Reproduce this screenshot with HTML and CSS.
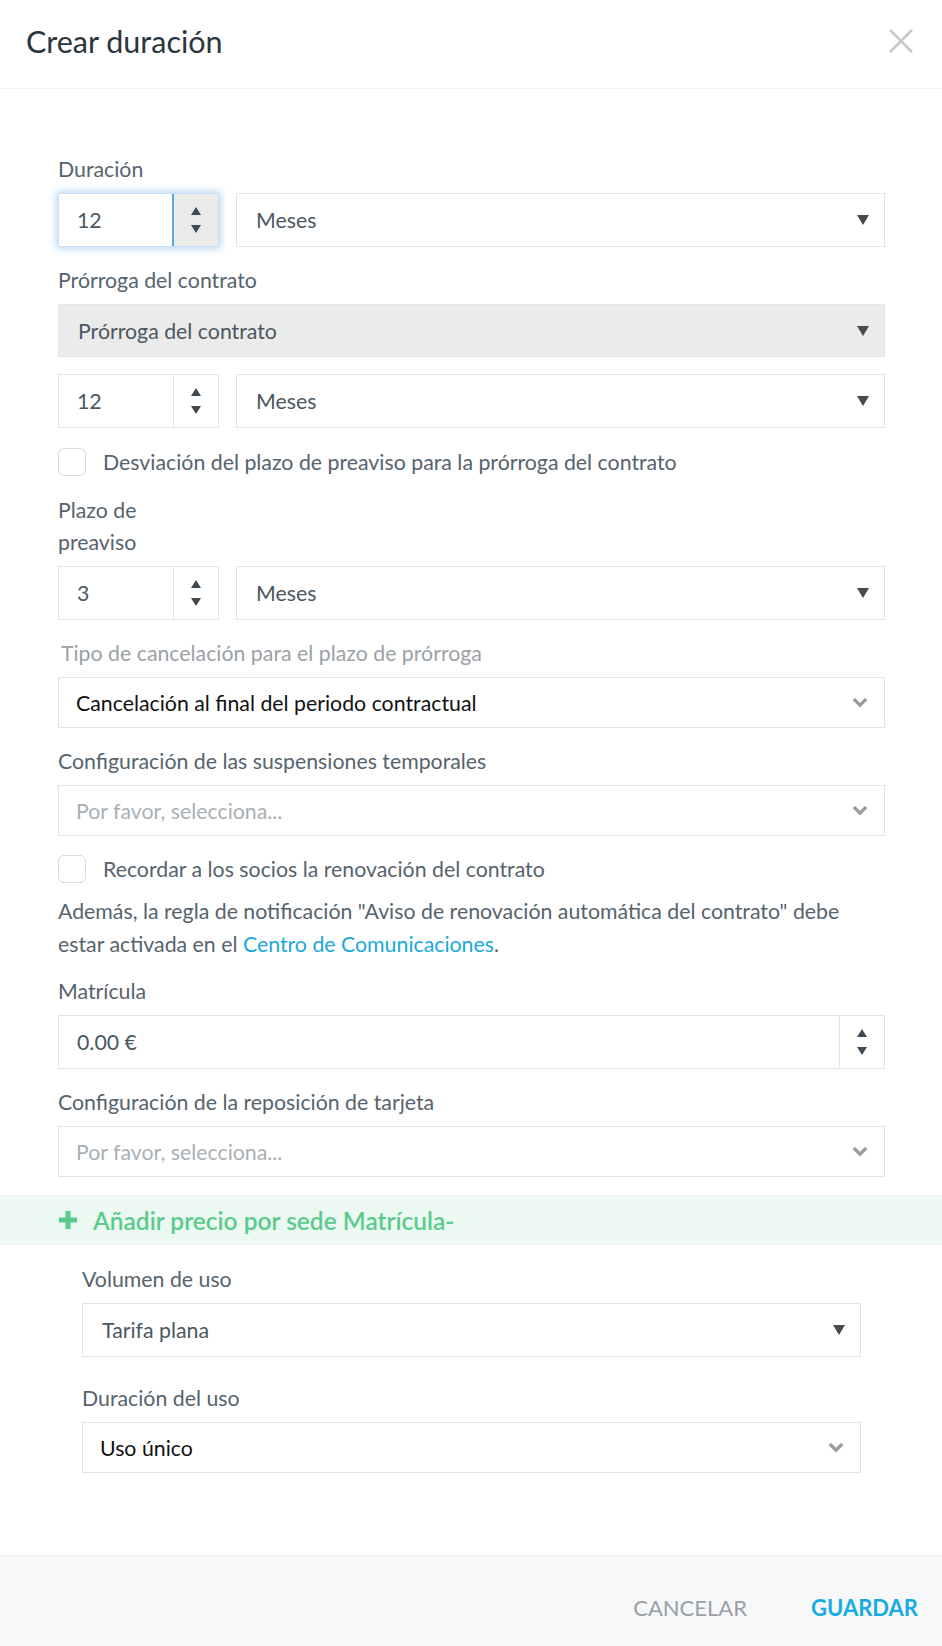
FILE: index.html
```html
<!DOCTYPE html>
<html>
<head>
    <title>Crear duración</title>
    <link rel="stylesheet" href="styles.css">
</head>
<body>
<div class="modal">
    <div class="modal-header">
        <h1>Crear duración</h1>
        <svg class="close" width="26" height="26" viewBox="0 0 26 26"><path d="M2 2L24 24M24 2L2 24" stroke="#c9c9c9" stroke-width="2.6" fill="none"/></svg>
    </div>

    <div class="modal-body">
        <div class="label">Duración</div>
        <div class="row">
            <div class="number focused">
                <span class="value">12</span>
                <span class="spin"><i class="up"></i><i class="down"></i></span>
            </div>
            <div class="select"><span>Meses</span><i class="caret"></i></div>
        </div>

        <div class="label gap">Prórroga del contrato</div>
        <div class="select gray"><span>Prórroga del contrato</span><i class="caret"></i></div>
        <div class="row gap">
            <div class="number">
                <span class="value">12</span>
                <span class="spin"><i class="up"></i><i class="down"></i></span>
            </div>
            <div class="select"><span>Meses</span><i class="caret"></i></div>
        </div>

        <label class="check first-check"><span class="box"></span>Desviación del plazo de preaviso para la prórroga del contrato</label>

        <div class="label narrow">Plazo de preaviso</div>
        <div class="row">
            <div class="number">
                <span class="value">3</span>
                <span class="spin"><i class="up"></i><i class="down"></i></span>
            </div>
            <div class="select"><span>Meses</span><i class="caret"></i></div>
        </div>

        <div class="label gap light">Tipo de cancelación para el plazo de prórroga</div>
        <div class="select chev dark"><span>Cancelación al final del periodo contractual</span><svg class="chevron" width="16" height="11" viewBox="0 0 16 11"><path d="M1.8 2L8 8.2L14.2 2" stroke="#9c9c9c" stroke-width="3.2" fill="none"/></svg></div>

        <div class="label gap">Configuración de las suspensiones temporales</div>
        <div class="select chev placeholder"><span>Por favor, selecciona...</span><svg class="chevron" width="16" height="11" viewBox="0 0 16 11"><path d="M1.8 2L8 8.2L14.2 2" stroke="#9c9c9c" stroke-width="3.2" fill="none"/></svg></div>

        <label class="check second-check"><span class="box"></span>Recordar a los socios la renovación del contrato</label>
        <p class="note">Además, la regla de notificación "Aviso de renovación automática del contrato" debe estar activada en el <a href="#">Centro de Comunicaciones</a>.</p>

        <div class="label">Matrícula</div>
        <div class="number wide">
            <span class="value">0.00 €</span>
            <span class="spin"><i class="up"></i><i class="down"></i></span>
        </div>

        <div class="label gap">Configuración de la reposición de tarjeta</div>
        <div class="select chev placeholder"><span>Por favor, selecciona...</span><svg class="chevron" width="16" height="11" viewBox="0 0 16 11"><path d="M1.8 2L8 8.2L14.2 2" stroke="#9c9c9c" stroke-width="3.2" fill="none"/></svg></div>
    </div>

    <div class="add-band">
        <svg width="20" height="20" viewBox="0 0 20 20"><path d="M10 1V19M1 10H19" stroke="#5bcb8c" stroke-width="5"/></svg>
        <span>Añadir precio por sede Matrícula-</span>
    </div>

    <div class="nested">
        <div class="label">Volumen de uso</div>
        <div class="select"><span>Tarifa plana</span><i class="caret"></i></div>
        <div class="label gap-lg">Duración del uso</div>
        <div class="select chev dark"><span>Uso único</span><svg class="chevron" width="16" height="11" viewBox="0 0 16 11"><path d="M1.8 2L8 8.2L14.2 2" stroke="#9c9c9c" stroke-width="3.2" fill="none"/></svg></div>
    </div>

    <div class="modal-footer">
        <button class="cancel">CANCELAR</button>
        <button class="save">GUARDAR</button>
    </div>
</div>
</body>
</html>
```

FILE: styles.css
```css
body {
    margin: 0;
    font-family: Lato, "Open Sans", sans-serif;
    color: #56636d;
    background: #fff;
}
.modal {
    width: 942px;
    min-height: 1646px;
    display: flex;
    flex-direction: column;
}
.modal-header {
    height: 89px;
    box-sizing: border-box;
    border-bottom: 1px solid #eef0f2;
    display: flex;
    align-items: center;
    justify-content: space-between;
    padding: 0 28px 6px 26px;
}
.modal-header h1 {
    margin: 0;
    font-size: 30.5px;
    font-weight: 400;
    color: #2b3640;
}
.modal-body {
    padding: 64px 57px 0 58px;
}
.label {
    font-size: 21.3px;
    line-height: 32px;
    margin-bottom: 8px;
}
.label.gap {
    margin-top: 17px;
}
.label.gap-lg {
    margin-top: 25px;
}
.label.light {
    color: #9aa1a7;
    padding-left: 3px;
}
.label.narrow {
    width: 100px;
    margin-top: 16px;
}
.row {
    display: flex;
    gap: 17px;
}
.row.gap {
    margin-top: 17px;
}
.number {
    width: 161px;
    height: 54px;
    box-sizing: border-box;
    border: 1px solid #e1e5e8;
    display: flex;
    align-items: stretch;
    font-size: 21.3px;
    color: #4b5862;
    flex-shrink: 0;
}
.number .value {
    flex: 1;
    display: flex;
    align-items: center;
    padding-left: 18px;
}
.number .spin {
    width: 44px;
    border-left: 1px solid #e1e5e8;
    display: flex;
    flex-direction: column;
    align-items: center;
    justify-content: center;
    gap: 10px;
}
.number.focused {
    border-color: #c9def2;
    box-shadow: 0 0 7px 2px rgba(102, 175, 233, 0.45);
    border-radius: 2px;
}
.number.focused .spin {
    background: #ebebeb;
    border-left: 2px solid #5aa9e6;
}
.number.wide {
    width: auto;
}
.spin .up, .spin .down {
    width: 0;
    height: 0;
    border-left: 5px solid transparent;
    border-right: 5px solid transparent;
}
.spin .up {
    border-bottom: 8px solid #3f4a52;
}
.spin .down {
    border-top: 8px solid #3f4a52;
}
.select {
    flex: 1;
    height: 54px;
    box-sizing: border-box;
    border: 1px solid #e1e5e8;
    display: flex;
    align-items: center;
    justify-content: space-between;
    padding: 0 15px 0 19px;
    font-size: 21.3px;
    color: #4b5862;
}
.select.gray {
    background: #ebebeb;
    height: 53px;
}
.caret {
    width: 0;
    height: 0;
    border-left: 6px solid transparent;
    border-right: 6px solid transparent;
    border-top: 10px solid #4a4a4a;
}
.select.chev {
    height: 51px;
    padding: 0 16px 0 17px;
}
.select.dark {
    color: #111;
}
.select.placeholder {
    color: #a9b0b5;
}
.chevron {
    flex-shrink: 0;
}
.check {
    display: flex;
    align-items: center;
    font-size: 21.3px;
    line-height: 32px;
}
.check .box {
    width: 26px;
    height: 26px;
    border: 1px solid #d8dcdf;
    border-radius: 6px;
    margin-right: 17px;
    flex-shrink: 0;
}
.first-check {
    margin-top: 18px;
}
.second-check {
    margin-top: 17px;
}
.note {
    font-size: 21.3px;
    line-height: 32.5px;
    margin: 10px 0 15px;
    max-width: 800px;
}
.note a {
    color: #1aa9da;
    text-decoration: none;
}
.add-band {
    margin-top: 18px;
    height: 50px;
    background: #ebf9f2;
    display: flex;
    align-items: center;
    padding-left: 58px;
    gap: 15px;
    font-size: 24.5px;
    color: #5bcb8c;
    font-weight: 600;
}
.nested {
    padding: 18px 81px 0 82px;
}
.modal-footer {
    margin-top: auto;
    height: 90px;
    background: #f7f8fa;
    border-top: 1px solid #f1f2f4;
    display: flex;
    align-items: center;
    justify-content: flex-end;
    gap: 64px;
    padding-right: 24px;
}
.modal-footer button {
    border: none;
    background: none;
    font-family: inherit;
    font-size: 22px;
    padding: 0;
    margin-top: 12px;
    cursor: pointer;
}
.cancel {
    color: #9aa0a5;
}
.save {
    color: #16ace0;
    font-weight: 700;
}
```
